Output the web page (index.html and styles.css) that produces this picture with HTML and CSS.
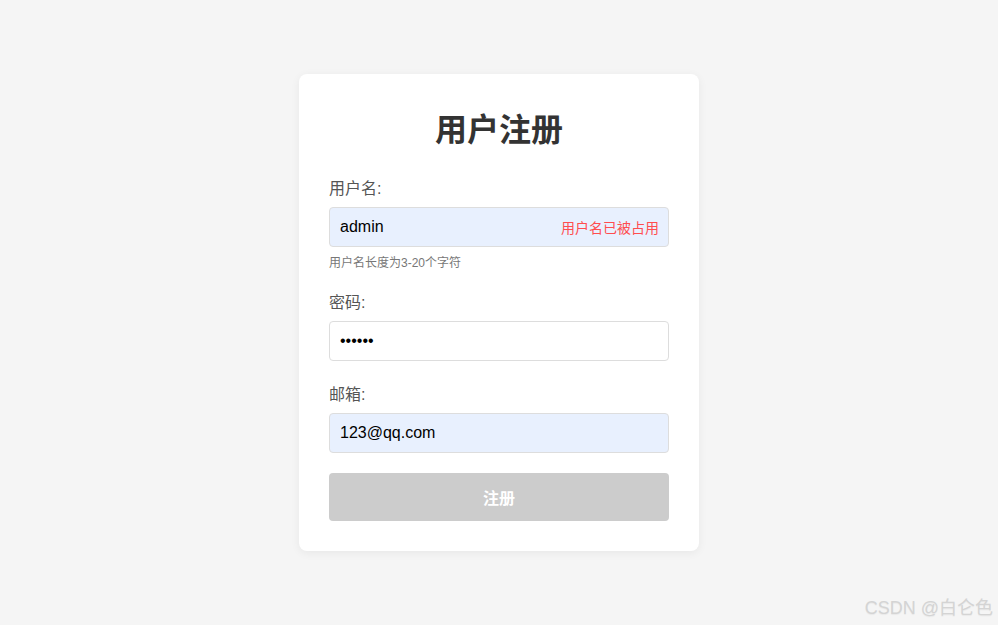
FILE: index.html
```html
<!DOCTYPE html>
<html lang="zh-CN">
<head>
  <meta charset="utf-8">
  <meta name="viewport" content="width=device-width, initial-scale=1">
  <title>用户注册</title>
<link rel="stylesheet" href="styles.css">
</head>
<body>
  <main class="card">
    <h1>用户注册</h1>
    <form class="form">
      <div class="group first">
        <label for="username">用户名:</label>
        <div class="field">
          <input id="username" class="input filled" type="text" value="admin">
          <span class="error">用户名已被占用</span>
        </div>
        <div class="hint">用户名长度为3-20个字符</div>
      </div>
      <div class="group">
        <label for="password">密码:</label>
        <input id="password" class="input" type="password" value="123456">
      </div>
      <div class="group last">
        <label for="email">邮箱:</label>
        <input id="email" class="input filled" type="text" value="123@qq.com">
      </div>
      <button class="submit" type="button" disabled>注册</button>
    </form>
  </main>
  <div class="watermark">CSDN @白仑色</div>
</body>
</html>
```

FILE: styles.css
```css
html, body {
  margin: 0;
  height: 100%;
}
body {
  background: #f5f5f5;
  font-family: "Liberation Sans", "Noto Sans CJK SC", sans-serif;
  display: flex;
  align-items: center;
  justify-content: center;
}
.card {
  width: 400px;
  box-sizing: border-box;
  padding: 30px;
  background: #fff;
  border-radius: 8px;
  box-shadow: 0 2px 10px rgba(0, 0, 0, 0.06);
}
h1 {
  margin: 0 0 21px;
  height: 52px;
  line-height: 52px;
  text-align: center;
  font-size: 32px;
  color: #333;
  font-weight: bold;
}
.group {
  margin-bottom: 22px;
}
.group.first {
  margin-bottom: 20px;
}
.group.last {
  margin-bottom: 20px;
}
label {
  display: block;
  line-height: 24px;
  margin-bottom: 6px;
  font-size: 16px;
  color: #555;
}
.field {
  position: relative;
}
.input {
  display: block;
  width: 100%;
  height: 40px;
  box-sizing: border-box;
  padding: 0 10px;
  border: 1px solid #ddd;
  border-radius: 4px;
  background: #fff;
  font-family: "Liberation Sans", "Noto Sans CJK SC", sans-serif;
  font-size: 16px;
  color: #000;
  outline: none;
}
.input.filled {
  background: #e8f0fe;
}
.error {
  position: absolute;
  right: 10px;
  top: 11px;
  font-size: 14px;
  line-height: 20px;
  color: #ff4d4f;
}
.hint {
  margin-top: 8px;
  font-size: 12px;
  line-height: 16px;
  color: #777;
}
.submit {
  display: block;
  width: 100%;
  height: 48px;
  border: none;
  border-radius: 4px;
  background: #ccc;
  color: #fff;
  font-family: "Liberation Sans", "Noto Sans CJK SC", sans-serif;
  font-size: 16px;
  font-weight: bold;
}
.watermark {
  position: absolute;
  right: 5px;
  bottom: 6px;
  font-size: 18px;
  font-weight: normal;
  color: #d4d4d4;
  text-shadow: 0 1px 1px rgba(0, 0, 0, 0.05);
}
```
